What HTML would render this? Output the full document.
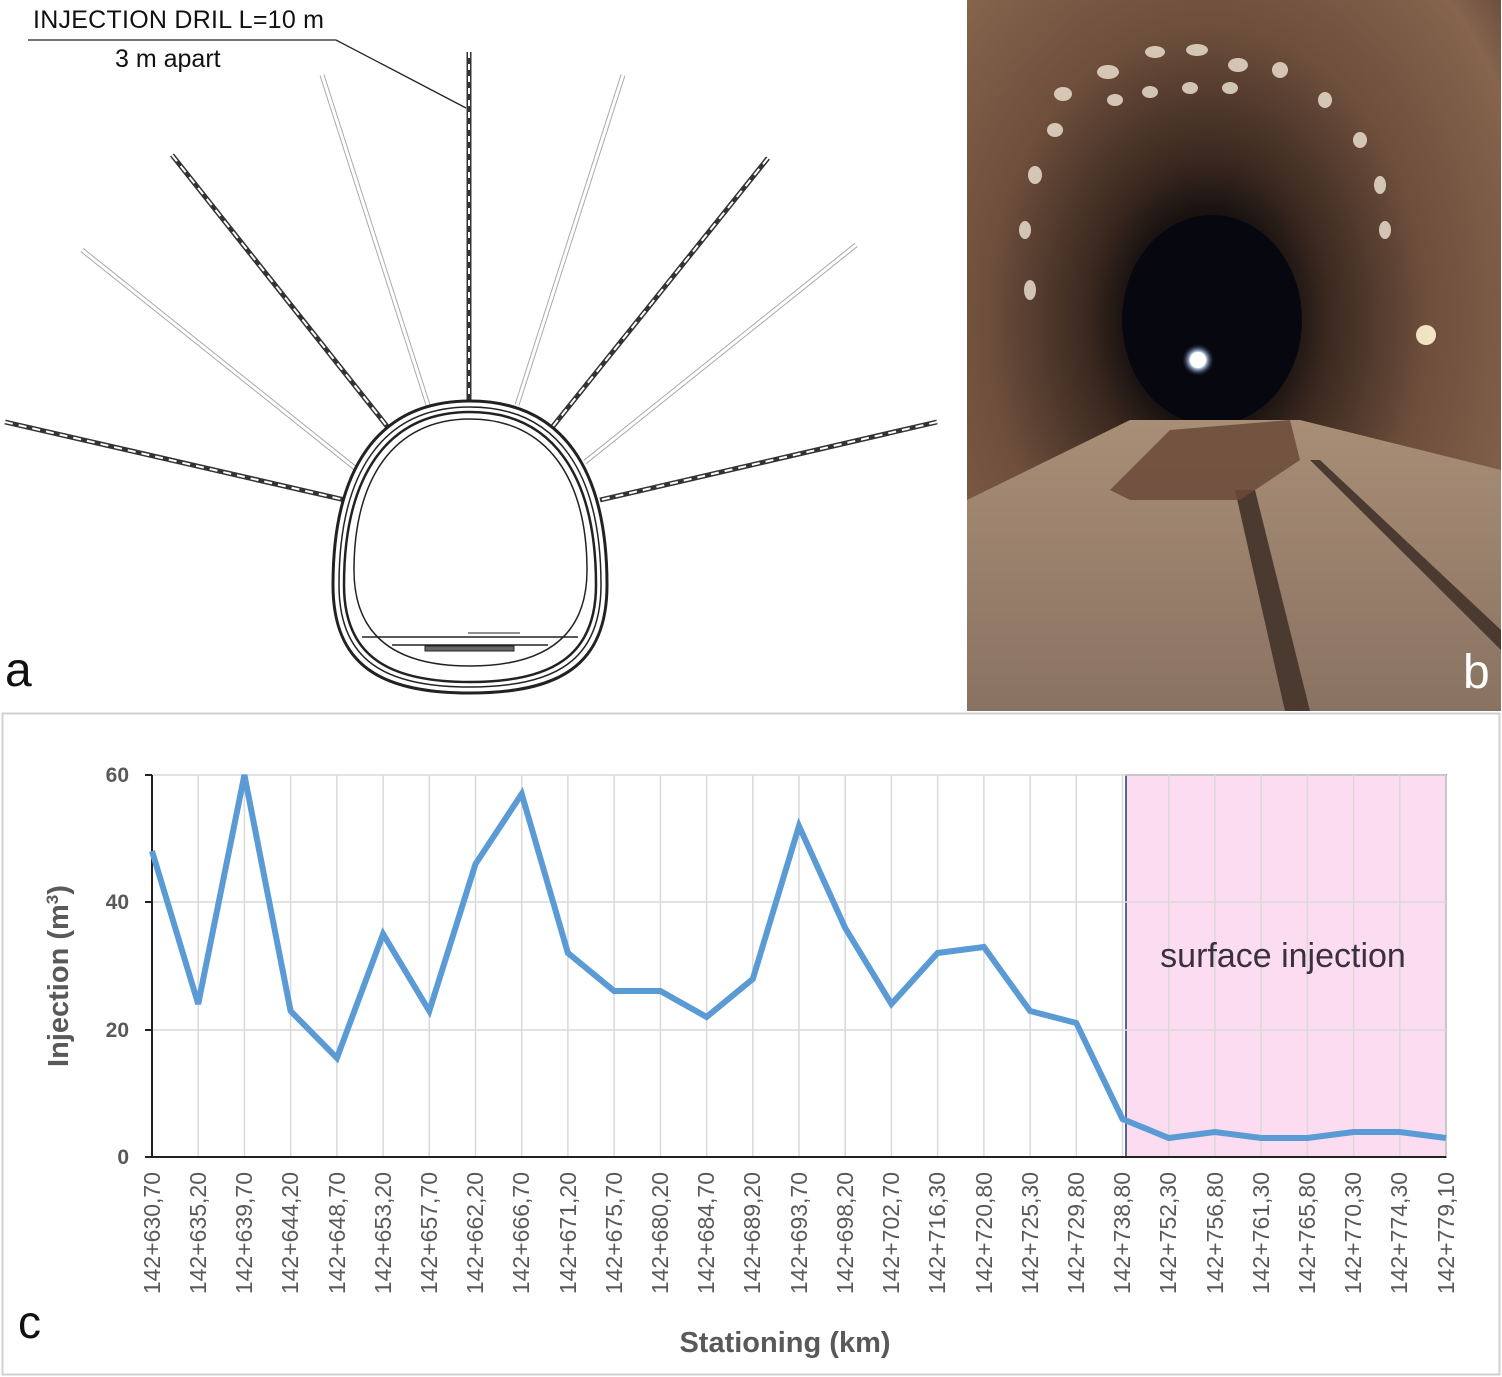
<!DOCTYPE html>
<html><head><meta charset="utf-8"><style>
html,body{margin:0;padding:0;background:#fff;}
svg{display:block;font-family:"Liberation Sans",sans-serif;}
</style></head><body>
<svg width="1502" height="1377" viewBox="0 0 1502 1377" xmlns="http://www.w3.org/2000/svg">
<defs>
<radialGradient id="tun" cx="0.45" cy="0.45" r="0.75">
<stop offset="0" stop-color="#05060c"/>
<stop offset="0.17" stop-color="#0e0b0c"/>
<stop offset="0.3" stop-color="#3a281f"/>
<stop offset="0.55" stop-color="#6e4f3c"/>
<stop offset="0.85" stop-color="#86644e"/>
<stop offset="1" stop-color="#5e4536"/>
</radialGradient>
<linearGradient id="floor" x1="0" y1="0" x2="0" y2="1">
<stop offset="0" stop-color="#a88e76"/>
<stop offset="1" stop-color="#8a7262"/>
</linearGradient>
<radialGradient id="glow" cx="0.5" cy="0.5" r="0.5">
<stop offset="0" stop-color="#ffffff"/>
<stop offset="0.5" stop-color="#cfe2ff"/>
<stop offset="1" stop-color="#1a2a50" stop-opacity="0"/>
</radialGradient>
</defs>

<!-- Panel a: drawing -->
<g stroke="#222" fill="none">
<text x="33" y="28" font-size="25" fill="#111" stroke="none" textLength="291">INJECTION DRIL L=10 m</text>
<text x="115" y="67" font-size="25" fill="#111" stroke="none">3 m apart</text>
<polyline points="28,40 336,40 466,108" stroke-width="1.3"/>
<g stroke-width="5" stroke="#333">
<line x1="469" y1="52" x2="469" y2="400"/>
<line x1="172" y1="155" x2="390" y2="430"/>
<line x1="768" y1="158" x2="550" y2="430"/>
<line x1="5" y1="422" x2="345" y2="500"/>
<line x1="937" y1="422" x2="600" y2="500"/>
</g>
<g stroke-width="2" stroke="#fff">
<line x1="469" y1="52" x2="469" y2="400" stroke-dasharray="6 6"/>
<line x1="172" y1="155" x2="390" y2="430" stroke-dasharray="8 6"/>
<line x1="768" y1="158" x2="550" y2="430" stroke-dasharray="8 6"/>
<line x1="5" y1="422" x2="345" y2="500" stroke-dasharray="8 6"/>
<line x1="937" y1="422" x2="600" y2="500" stroke-dasharray="8 6"/>
</g>
<g stroke-width="5" stroke="#aaa">
<line x1="322" y1="75" x2="428" y2="405"/>
<line x1="82" y1="250" x2="355" y2="468"/>
<line x1="623" y1="75" x2="517" y2="405"/>
<line x1="856" y1="245" x2="585" y2="462"/>
</g>
<g stroke-width="3" stroke="#fff">
<line x1="322" y1="75" x2="428" y2="405"/>
<line x1="82" y1="250" x2="355" y2="468"/>
<line x1="623" y1="75" x2="517" y2="405"/>
<line x1="856" y1="245" x2="585" y2="462"/>
</g>
<path d="M470,401 C563,401 607,470 607,585 C607,665 560,693 470,693 C380,693 333,665 333,585 C333,470 377,401 470,401 Z" stroke-width="3" fill="#fff"/>
<path d="M470,407 C558,407 601,473 601,585 C601,660 556,687 470,687 C384,687 339,660 339,585 C339,473 382,407 470,407 Z" stroke-width="1.5"/>
<path d="M470,412 C553,412 596,476 596,585 C596,656 552,682 470,682 C388,682 344,656 344,585 C344,476 387,412 470,412 Z" stroke-width="2.5"/>
<path d="M470,419 C548,419 587,480 587,570 C587,640 540,666 470,666 C400,666 354,640 354,570 C354,480 393,419 470,419 Z" stroke-width="1.5"/>
<line x1="362" y1="637" x2="578" y2="637" stroke-width="1.5"/>
<line x1="392" y1="645" x2="548" y2="645" stroke-width="1.5"/>
<rect x="425" y="646" width="89" height="5" fill="#666" stroke-width="1"/>
<line x1="468" y1="633" x2="520" y2="633" stroke-width="1"/>
</g>
<text x="5" y="686" font-size="48" fill="#111">a</text>

<!-- Panel b: photo -->
<g>
<rect x="967" y="0" width="534" height="711" fill="url(#tun)"/>
<ellipse cx="1212" cy="320" rx="90" ry="105" fill="#07080f"/>
<path d="M967,500 L1130,420 L1300,420 L1501,470 L1501,711 L967,711 Z" fill="url(#floor)"/>
<path d="M1235,490 L1285,711 L1310,711 L1255,490 Z" fill="#4a3a30"/>
<path d="M1310,460 L1501,650 L1501,630 L1320,460 Z" fill="#4a3a30"/>
<path d="M1110,490 L1170,430 L1290,420 L1300,460 L1240,500 L1130,500 Z" fill="#6a4a38" opacity="0.85"/>
<circle cx="1198" cy="360" r="16" fill="url(#glow)"/>
<circle cx="1198" cy="360" r="8" fill="#fff"/>
<circle cx="1426" cy="335" r="10" fill="#fff4d0" opacity="0.9"/>
<g fill="#e8dccc" opacity="0.85">
<ellipse cx="1155" cy="52" rx="10" ry="6"/><ellipse cx="1197" cy="50" rx="11" ry="6"/><ellipse cx="1238" cy="65" rx="10" ry="7"/>
<ellipse cx="1108" cy="72" rx="11" ry="7"/><ellipse cx="1063" cy="94" rx="9" ry="7"/><ellipse cx="1055" cy="130" rx="8" ry="7"/>
<ellipse cx="1035" cy="175" rx="7" ry="9"/><ellipse cx="1025" cy="230" rx="6" ry="9"/><ellipse cx="1030" cy="290" rx="6" ry="10"/>
<ellipse cx="1280" cy="70" rx="8" ry="8"/><ellipse cx="1325" cy="100" rx="7" ry="8"/><ellipse cx="1360" cy="140" rx="7" ry="8"/>
<ellipse cx="1380" cy="185" rx="6" ry="9"/><ellipse cx="1385" cy="230" rx="6" ry="9"/><ellipse cx="1115" cy="100" rx="8" ry="6"/>
<ellipse cx="1150" cy="92" rx="8" ry="6"/><ellipse cx="1190" cy="88" rx="8" ry="6"/><ellipse cx="1230" cy="88" rx="8" ry="6"/>
</g>
<text x="1463" y="688" font-size="48" fill="#fff">b</text>
</g>

<!-- Panel c: chart -->
<rect x="2.5" y="713.5" width="1497" height="661" fill="#fff" stroke="#d0d0d0" stroke-width="2"/>
<rect x="1126" y="775" width="320" height="382" fill="#fcdcf0" stroke="#1f3864" stroke-width="1.5"/>
<g stroke="#d9d9d9" stroke-width="1.5">
<line x1="152" y1="775" x2="1446" y2="775"/><line x1="152" y1="902" x2="1446" y2="902"/><line x1="152" y1="1030" x2="1446" y2="1030"/>
</g>
<g stroke="#d9d9d9" stroke-width="1.5">
<line x1="198.2" y1="775" x2="198.2" y2="1157"/><line x1="244.4" y1="775" x2="244.4" y2="1157"/><line x1="290.6" y1="775" x2="290.6" y2="1157"/><line x1="336.9" y1="775" x2="336.9" y2="1157"/><line x1="383.1" y1="775" x2="383.1" y2="1157"/><line x1="429.3" y1="775" x2="429.3" y2="1157"/><line x1="475.5" y1="775" x2="475.5" y2="1157"/><line x1="521.7" y1="775" x2="521.7" y2="1157"/><line x1="567.9" y1="775" x2="567.9" y2="1157"/><line x1="614.1" y1="775" x2="614.1" y2="1157"/><line x1="660.4" y1="775" x2="660.4" y2="1157"/><line x1="706.6" y1="775" x2="706.6" y2="1157"/><line x1="752.8" y1="775" x2="752.8" y2="1157"/><line x1="799" y1="775" x2="799" y2="1157"/><line x1="845.2" y1="775" x2="845.2" y2="1157"/><line x1="891.4" y1="775" x2="891.4" y2="1157"/><line x1="937.6" y1="775" x2="937.6" y2="1157"/><line x1="983.9" y1="775" x2="983.9" y2="1157"/><line x1="1030.1" y1="775" x2="1030.1" y2="1157"/><line x1="1076.3" y1="775" x2="1076.3" y2="1157"/><line x1="1122.5" y1="775" x2="1122.5" y2="1157"/><line x1="1168.7" y1="775" x2="1168.7" y2="1157"/><line x1="1214.9" y1="775" x2="1214.9" y2="1157"/><line x1="1261.1" y1="775" x2="1261.1" y2="1157"/><line x1="1307.4" y1="775" x2="1307.4" y2="1157"/><line x1="1353.6" y1="775" x2="1353.6" y2="1157"/><line x1="1399.8" y1="775" x2="1399.8" y2="1157"/><line x1="1446" y1="775" x2="1446" y2="1157"/>
</g>
<g stroke="#222" stroke-width="2">
<line x1="152" y1="775" x2="152" y2="1158"/>
<line x1="145" y1="775" x2="152" y2="775"/><line x1="145" y1="902" x2="152" y2="902"/><line x1="145" y1="1030" x2="152" y2="1030"/>
<line x1="145" y1="1157" x2="1446" y2="1157"/>
</g>
<text x="1283" y="967" font-size="34" fill="#3a3040" text-anchor="middle">surface injection</text>
<polyline fill="none" stroke="#5b9bd5" stroke-width="6" stroke-linejoin="miter" points="152,851 198.2,1004 244.4,775 290.6,1011 336.9,1058 383.1,934 429.3,1011 475.5,864 521.7,794 567.9,953 614.1,991 660.4,991 706.6,1017 752.8,979 799,826 845.2,928 891.4,1004 937.6,953 983.9,947 1030.1,1011 1076.3,1023 1122.5,1119 1168.7,1138 1214.9,1132 1261.1,1138 1307.4,1138 1353.6,1132 1399.8,1132 1446,1138"/>
<g font-size="21" font-weight="bold" fill="#595959" text-anchor="end">
<text x="129" y="782">60</text><text x="129" y="909">40</text><text x="129" y="1037">20</text><text x="129" y="1164">0</text>
</g>
<g font-size="23" fill="#595959" text-anchor="end">
<text transform="translate(160,1172) rotate(-90)">142+630,70</text>
<text transform="translate(206,1172) rotate(-90)">142+635,20</text>
<text transform="translate(252,1172) rotate(-90)">142+639,70</text>
<text transform="translate(298,1172) rotate(-90)">142+644,20</text>
<text transform="translate(345,1172) rotate(-90)">142+648,70</text>
<text transform="translate(391,1172) rotate(-90)">142+653,20</text>
<text transform="translate(437,1172) rotate(-90)">142+657,70</text>
<text transform="translate(483,1172) rotate(-90)">142+662,20</text>
<text transform="translate(529,1172) rotate(-90)">142+666,70</text>
<text transform="translate(576,1172) rotate(-90)">142+671,20</text>
<text transform="translate(622,1172) rotate(-90)">142+675,70</text>
<text transform="translate(668,1172) rotate(-90)">142+680,20</text>
<text transform="translate(714,1172) rotate(-90)">142+684,70</text>
<text transform="translate(760,1172) rotate(-90)">142+689,20</text>
<text transform="translate(807,1172) rotate(-90)">142+693,70</text>
<text transform="translate(853,1172) rotate(-90)">142+698,20</text>
<text transform="translate(899,1172) rotate(-90)">142+702,70</text>
<text transform="translate(945,1172) rotate(-90)">142+716,30</text>
<text transform="translate(992,1172) rotate(-90)">142+720,80</text>
<text transform="translate(1038,1172) rotate(-90)">142+725,30</text>
<text transform="translate(1084,1172) rotate(-90)">142+729,80</text>
<text transform="translate(1130,1172) rotate(-90)">142+738,80</text>
<text transform="translate(1176,1172) rotate(-90)">142+752,30</text>
<text transform="translate(1223,1172) rotate(-90)">142+756,80</text>
<text transform="translate(1269,1172) rotate(-90)">142+761,30</text>
<text transform="translate(1315,1172) rotate(-90)">142+765,80</text>
<text transform="translate(1361,1172) rotate(-90)">142+770,30</text>
<text transform="translate(1407,1172) rotate(-90)">142+774,30</text>
<text transform="translate(1454,1172) rotate(-90)">142+779,10</text>
</g>
<text transform="translate(68,976) rotate(-90)" font-size="29" font-weight="bold" fill="#595959" text-anchor="middle">Injection (m<tspan font-size="17" dy="-10">3</tspan><tspan dy="10">)</tspan></text>
<text x="785" y="1352" font-size="29" font-weight="bold" fill="#595959" text-anchor="middle">Stationing (km)</text>
<text x="18" y="1338" font-size="46" fill="#111">c</text>
</svg>
</body></html>
